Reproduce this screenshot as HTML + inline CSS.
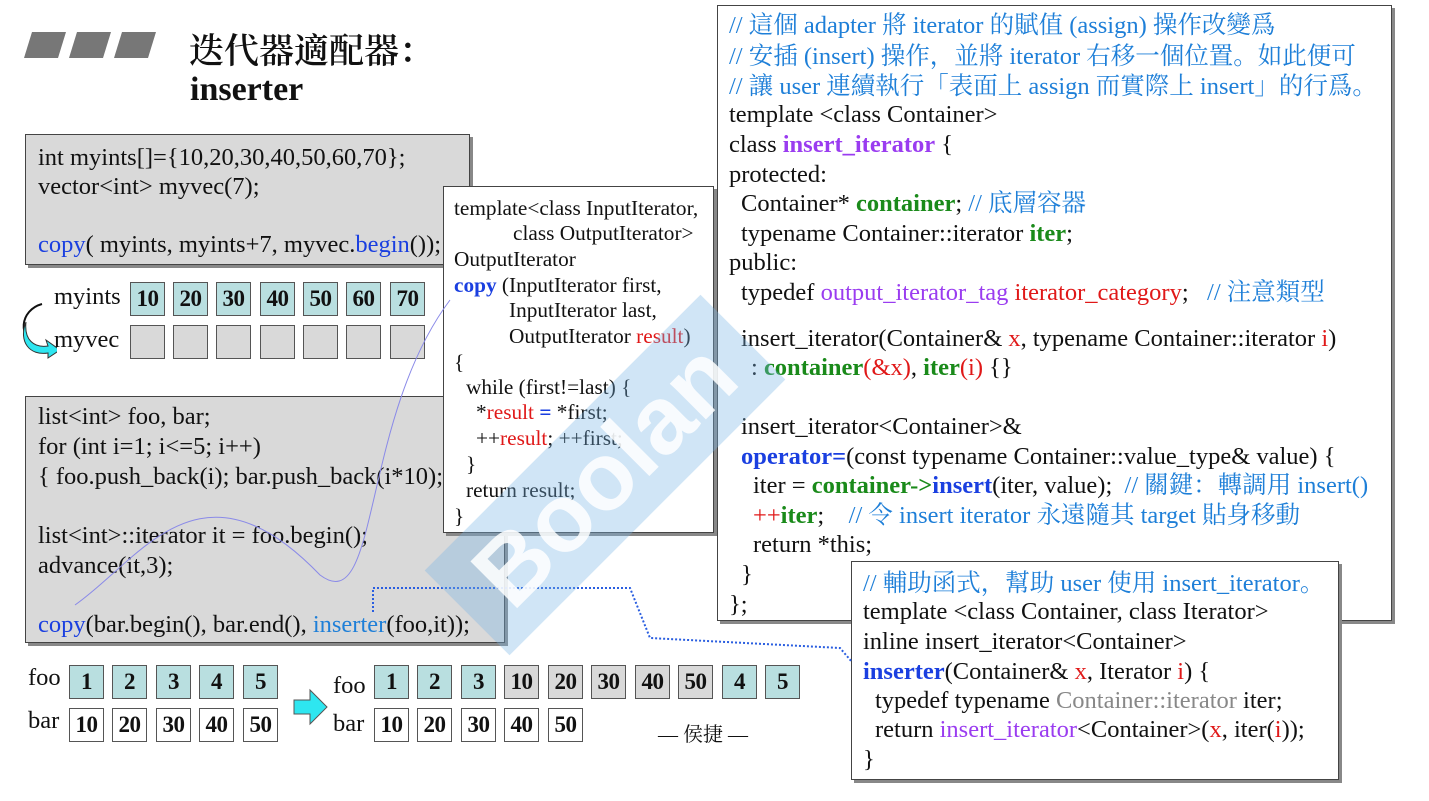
<!DOCTYPE html>
<html><head><meta charset="utf-8">
<style>
*{margin:0;padding:0;box-sizing:border-box}
body{width:1429px;height:801px;background:#fff;position:relative;overflow:hidden;font-family:"Liberation Serif","Noto Serif CJK SC","Noto Sans CJK TC",serif;color:#111}
.a{position:absolute;white-space:pre}
.box{position:absolute;border:1.5px solid #444;box-shadow:3px 3px 0 #888}
.l{position:absolute;white-space:pre;font-size:24.5px;line-height:24px;margin-top:2px}
.s{font-size:21.3px}
.b{color:#1a3fe0}
.lb{color:#1e7fd8}
.g{color:#1a8a1a;font-weight:bold}
.p{color:#9a3cf0}
.pb{color:#9a3cf0;font-weight:bold}
.r{color:#e01818}
.bb{color:#1a3fe0;font-weight:bold}
.gr{color:#888}
.cell{position:absolute;width:35px;height:34px;border:1.5px solid #555;font-weight:bold;font-size:23px;text-align:center;line-height:32px;letter-spacing:-0.5px}
.c{background:#b9dfe0}
.e{background:#d9d9d9}
.w{background:#fff}
</style></head><body>

<svg class="a" style="left:24px;top:32px" width="135" height="28"><g fill="#777"><polygon points="8,0 42,0 34,26 0,26"/><polygon points="53,0 87,0 79,26 45,26"/><polygon points="98,0 132,0 124,26 90,26"/></g></svg>
<div class="a" style="left:189px;top:28px;font-size:35px;line-height:42px;font-family:'Noto Serif CJK SC',serif;font-weight:600">迭代器適配器：</div>
<div class="a" style="left:190px;top:70px;font-size:34px;font-weight:bold;line-height:40px">inserter</div>

<div class="box" style="left:25px;top:134px;width:445px;height:131px;background:#d9d9d9"></div>
<div class="l" style="left:38px;top:144px">int myints[]={10,20,30,40,50,60,70};</div>
<div class="l" style="left:38px;top:173px">vector&lt;int&gt; myvec(7);</div>
<div class="l" style="left:38px;top:231px"><span class="b">copy</span>( myints, myints+7, myvec.<span class="b">begin</span>());</div>

<div class="l" style="left:54px;top:283px">myints</div>
<div class="l" style="left:54px;top:326px">myvec</div>
<svg class="a" style="left:12px;top:300px" width="45" height="60"><path d="M30,4 C8,10 4,38 28,48" fill="none" stroke="#111" stroke-width="2"/><path d="M14,22 C12,40 22,48 36,46 L34,40 L48,50 L36,58 L36,53 C18,56 6,42 14,22Z" fill="#2ee6f0" stroke="#333" stroke-width="1"/></svg>
<div class="cell c" style="left:130px;top:282px">10</div>
<div class="cell c" style="left:173px;top:282px">20</div>
<div class="cell c" style="left:216px;top:282px">30</div>
<div class="cell c" style="left:260px;top:282px">40</div>
<div class="cell c" style="left:303px;top:282px">50</div>
<div class="cell c" style="left:346px;top:282px">60</div>
<div class="cell c" style="left:390px;top:282px">70</div>
<div class="cell e" style="left:130px;top:325px"></div>
<div class="cell e" style="left:173px;top:325px"></div>
<div class="cell e" style="left:216px;top:325px"></div>
<div class="cell e" style="left:260px;top:325px"></div>
<div class="cell e" style="left:303px;top:325px"></div>
<div class="cell e" style="left:346px;top:325px"></div>
<div class="cell e" style="left:390px;top:325px"></div>

<div class="box" style="left:25px;top:396px;width:480px;height:247px;background:#d9d9d9"></div>
<div class="l" style="left:38px;top:403px">list&lt;int&gt; foo, bar;</div>
<div class="l" style="left:38px;top:433px">for (int i=1; i&lt;=5; i++)</div>
<div class="l" style="left:38px;top:463px">{ foo.push_back(i); bar.push_back(i*10); }</div>
<div class="l" style="left:38px;top:522px">list&lt;int&gt;::iterator it = foo.begin();</div>
<div class="l" style="left:38px;top:552px">advance(it,3);</div>
<div class="l" style="left:38px;top:611px"><span class="b">copy</span>(bar.begin(), bar.end(), <span class="lb">inserter</span>(foo,it));</div>

<div class="box" style="left:443px;top:186px;width:271px;height:347px;background:#fff"></div>
<div class="l s" style="left:454px;top:194px">template&lt;class InputIterator,</div>
<div class="l s" style="left:513px;top:219px">class OutputIterator&gt;</div>
<div class="l s" style="left:454px;top:245px">OutputIterator</div>
<div class="l s" style="left:454px;top:271px"><span class="bb">copy</span> (InputIterator first,</div>
<div class="l s" style="left:509px;top:296px">InputIterator last,</div>
<div class="l s" style="left:509px;top:322px">OutputIterator <span class="r">result</span>)</div>
<div class="l s" style="left:454px;top:348px">{</div>
<div class="l s" style="left:466px;top:373px">while (first!=last) {</div>
<div class="l s" style="left:476px;top:398px">*<span class="r">result</span> <span class="bb">=</span> *first;</div>
<div class="l s" style="left:476px;top:424px">++<span class="r">result</span>; ++first;</div>
<div class="l s" style="left:466px;top:450px">}</div>
<div class="l s" style="left:466px;top:476px">return result;</div>
<div class="l s" style="left:454px;top:502px">}</div>

<div class="box" style="left:717px;top:5px;width:675px;height:616px;background:#fff"></div>
<div class="l" style="left:729px;top:12px"><span class="lb">// 這個 adapter 將 iterator 的賦值 (assign) 操作改變爲</span></div>
<div class="l" style="left:729px;top:43px"><span class="lb">// 安插 (insert) 操作，並將 iterator 右移一個位置。如此便可</span></div>
<div class="l" style="left:729px;top:73px"><span class="lb">// 讓 user 連續執行「表面上 assign 而實際上 insert」的行爲。</span></div>
<div class="l" style="left:729px;top:101px">template &lt;class Container&gt;</div>
<div class="l" style="left:729px;top:131px">class <span class="pb">insert_iterator</span> {</div>
<div class="l" style="left:729px;top:161px">protected:</div>
<div class="l" style="left:741px;top:190px">Container* <span class="g">container</span>; <span class="lb">// 底層容器</span></div>
<div class="l" style="left:741px;top:220px">typename Container::iterator <span class="g">iter</span>;</div>
<div class="l" style="left:729px;top:249px">public:</div>
<div class="l" style="left:741px;top:279px">typedef <span class="p">output_iterator_tag</span> <span class="r">iterator_category</span>;   <span class="lb">// 注意類型</span></div>
<div class="l" style="left:741px;top:325px">insert_iterator(Container&amp; <span class="r">x</span>, typename Container::iterator <span class="r">i</span>)</div>
<div class="l" style="left:751px;top:354px">: <span class="g">container</span><span class="r">(&amp;x)</span>, <span class="g">iter</span><span class="r">(i)</span> {}</div>
<div class="l" style="left:741px;top:413px">insert_iterator&lt;Container&gt;&amp;</div>
<div class="l" style="left:741px;top:443px"><span class="bb">operator=</span>(const typename Container::value_type&amp; value) {</div>
<div class="l" style="left:753px;top:472px">iter = <span class="g">container-&gt;</span><span class="bb">insert</span>(iter, value);  <span class="lb">// 關鍵：轉調用 insert()</span></div>
<div class="l" style="left:753px;top:502px"><span class="r">++</span><span class="g">iter</span>;    <span class="lb">// 令 insert iterator 永遠隨其 target 貼身移動</span></div>
<div class="l" style="left:753px;top:531px">return *this;</div>
<div class="l" style="left:741px;top:561px">}</div>
<div class="l" style="left:729px;top:591px">};</div>

<div class="box" style="left:851px;top:561px;width:488px;height:219px;background:#fff"></div>
<div class="l" style="left:863px;top:570px"><span class="lb">// 輔助函式，幫助 user 使用 insert_iterator。</span></div>
<div class="l" style="left:863px;top:598px">template &lt;class Container, class Iterator&gt;</div>
<div class="l" style="left:863px;top:628px">inline insert_iterator&lt;Container&gt;</div>
<div class="l" style="left:863px;top:658px"><span class="bb">inserter</span>(Container&amp; <span class="r">x</span>, Iterator <span class="r">i</span>) {</div>
<div class="l" style="left:875px;top:687px">typedef typename <span class="gr">Container::iterator</span> iter;</div>
<div class="l" style="left:875px;top:716px">return <span class="p">insert_iterator</span>&lt;Container&gt;(<span class="r">x</span>, iter(<span class="r">i</span>));</div>
<div class="l" style="left:863px;top:746px">}</div>

<div class="l" style="left:28px;top:664px">foo</div>
<div class="l" style="left:28px;top:707px">bar</div>
<div class="cell c" style="left:69px;top:665px">1</div>
<div class="cell c" style="left:112px;top:665px">2</div>
<div class="cell c" style="left:156px;top:665px">3</div>
<div class="cell c" style="left:199px;top:665px">4</div>
<div class="cell c" style="left:243px;top:665px">5</div>
<div class="cell w" style="left:69px;top:708px">10</div>
<div class="cell w" style="left:112px;top:708px">20</div>
<div class="cell w" style="left:156px;top:708px">30</div>
<div class="cell w" style="left:199px;top:708px">40</div>
<div class="cell w" style="left:243px;top:708px">50</div>
<svg class="a" style="left:292px;top:688px" width="38" height="40"><polygon points="2,12 18,12 18,2 35,19 18,36 18,26 2,26" fill="#2ee6f0" stroke="#555" stroke-width="1"/></svg>
<div class="l" style="left:333px;top:672px">foo</div>
<div class="l" style="left:333px;top:710px">bar</div>
<div class="cell c" style="left:374px;top:665px">1</div>
<div class="cell c" style="left:417px;top:665px">2</div>
<div class="cell c" style="left:461px;top:665px">3</div>
<div class="cell e" style="left:504px;top:665px">10</div>
<div class="cell e" style="left:548px;top:665px">20</div>
<div class="cell e" style="left:591px;top:665px">30</div>
<div class="cell e" style="left:635px;top:665px">40</div>
<div class="cell e" style="left:678px;top:665px">50</div>
<div class="cell c" style="left:722px;top:665px">4</div>
<div class="cell c" style="left:765px;top:665px">5</div>
<div class="cell w" style="left:374px;top:708px">10</div>
<div class="cell w" style="left:417px;top:708px">20</div>
<div class="cell w" style="left:461px;top:708px">30</div>
<div class="cell w" style="left:504px;top:708px">40</div>
<div class="cell w" style="left:548px;top:708px">50</div>
<div class="l" style="left:658px;top:721px;font-size:20px">— 侯捷 —</div>

<svg class="a" style="left:0;top:0" width="1429" height="801">
<path d="M373,612 L373,588 L630,588 L650,638 L840,648 L852,662" fill="none" stroke="#2a5ee0" stroke-width="2" stroke-dasharray="2,2"/>
<path d="M75,605 C140,560 200,450 320,575 C380,620 360,420 450,300" fill="none" stroke="#8a8ae8" stroke-width="1"/>
</svg>

<div class="a" style="left:410px;top:415px;width:390px;height:120px;background:rgba(120,180,230,0.35);transform:rotate(-45deg);transform-origin:center;color:rgba(255,255,255,0.85);font-family:'Liberation Sans',sans-serif;font-weight:bold;font-size:96px;line-height:120px;text-align:center">Boolan</div>
</body></html>
